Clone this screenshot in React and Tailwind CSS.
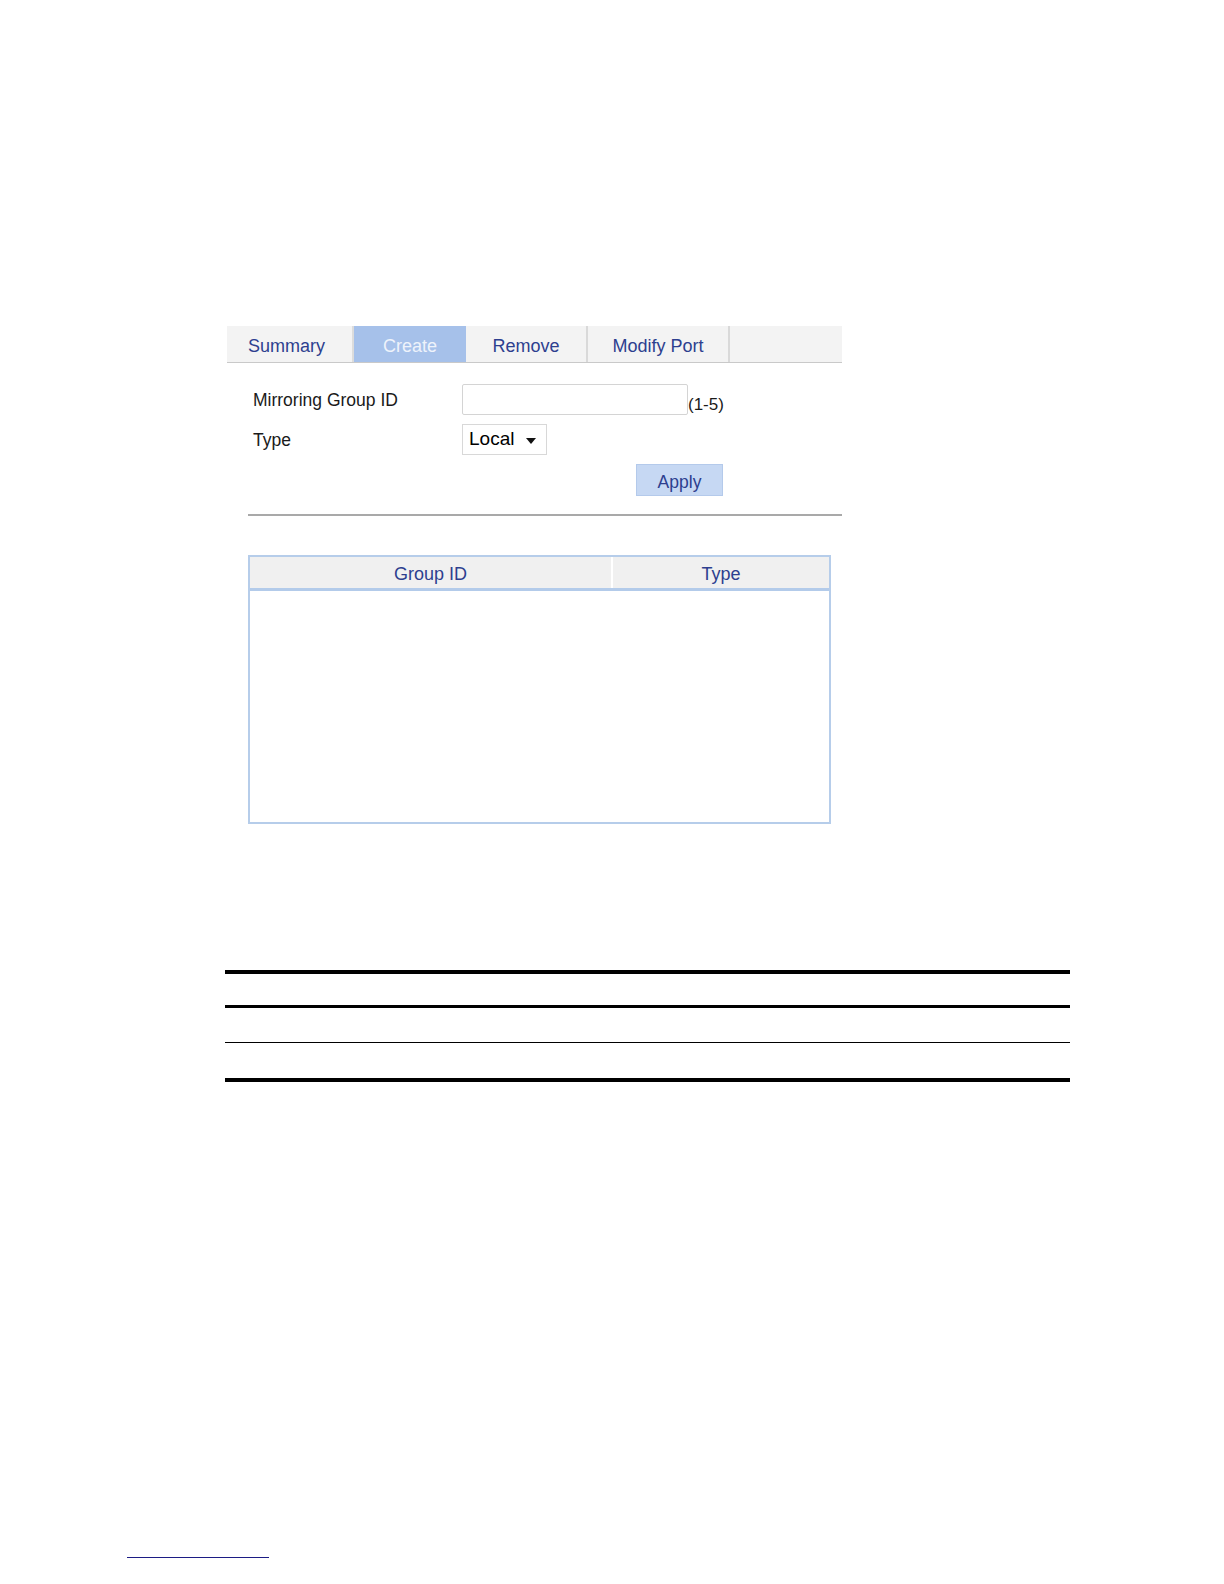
export default function App() {
  const font = { fontFamily: '"Liberation Sans", Arial, sans-serif' };
  return (
    <div className="w-full bg-white" style={font}>
      <div className="pt-[326px] pb-[20px]">
        {/* Tab bar */}
        <div className="ml-[227px] w-[615px] h-[37px] flex border-b border-[#c9c9c9] bg-[#f3f3f3] text-[18px] text-[#2d3f8f]">
          <div className="w-[127px] flex items-center pl-[21px] pt-[4px] border-r-2 border-[#dcdcdc]">Summary</div>
          <div className="w-[112px] flex items-center justify-center pt-[4px] bg-[#a6c1ea] text-[#eef3fb]">Create</div>
          <div className="w-[122px] flex items-center justify-center pt-[4px] border-r-2 border-[#d9d9d9]">Remove</div>
          <div className="w-[142px] flex items-center justify-center pt-[4px] border-r-2 border-[#d9d9d9]">Modify Port</div>
          <div className="flex-1"></div>
        </div>

        {/* Form */}
        <div className="ml-[253px] mt-[21px] text-[17.5px] text-[#1a1a1a]">
          <div className="flex h-[31px]">
            <div className="w-[209px] pt-[3px]">Mirroring Group ID</div>
            <div className="w-[226px] h-[31px] border border-[#d4d4d4] rounded-[2px] bg-white"></div>
            <div className="pt-[11px] text-[17px] leading-[20px]">(1-5)</div>
          </div>
          <div className="flex h-[31px] mt-[9px]">
            <div className="w-[209px] pt-[3px]">Type</div>
            <div className="w-[85px] h-[31px] border border-[#d8d8d8] bg-white flex items-center pl-[6px] text-[19px] text-black">
              <span>Local</span>
              <svg className="ml-[12px] mt-[2px]" width="10" height="6" viewBox="0 0 10 6">
                <polygon points="0,0 10,0 5,6" fill="#111" />
              </svg>
            </div>
          </div>
          <div className="flex mt-[9px]">
            <div className="ml-[383px] w-[87px] h-[32px] bg-[#c6d8f3] border border-[#b4caeb] flex items-center justify-center pt-[4px] text-[#2d3f8f]">Apply</div>
          </div>
        </div>

        {/* Separator */}
        <div className="ml-[248px] mt-[18px] w-[594px] h-[2px] bg-[#a9a9a9]"></div>

        {/* Table */}
        <div className="ml-[248px] mt-[39px] w-[583px] h-[269px] border-2 border-[#b6cdea] bg-white">
          <div className="flex h-[34px] bg-[#f0f0f0] border-b-[3px] border-[#b3cbea] text-[18px] text-[#2d3f8f]">
            <div className="w-[363px] flex items-center justify-center pt-[4px] border-r-2 border-white">Group ID</div>
            <div className="flex-1 flex items-center justify-center pt-[4px]">Type</div>
          </div>
        </div>

        {/* Black rule table */}
        <div className="ml-[225px] mt-[146px] w-[845px]">
          <div className="h-[4px] bg-black"></div>
          <div className="h-[31px]"></div>
          <div className="h-[3px] bg-black"></div>
          <div className="h-[34px]"></div>
          <div className="h-[1px] bg-black"></div>
          <div className="h-[35px]"></div>
          <div className="h-[4px] bg-black"></div>
        </div>

        {/* Footer link line */}
        <div className="ml-[127px] mt-[475px] w-[142px] h-[1px] bg-[#1c1c84]"></div>
      </div>
    </div>
  );
}
